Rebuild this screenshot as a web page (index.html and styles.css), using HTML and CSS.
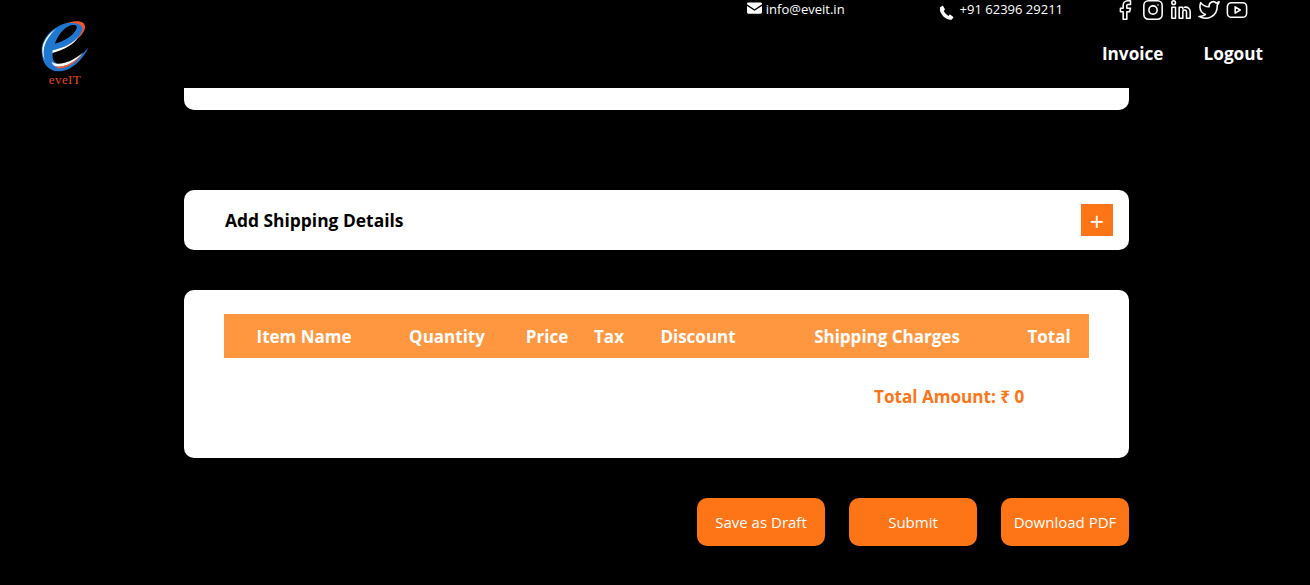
FILE: index.html
```html
<!DOCTYPE html>
<html lang="en">
  <head>
    <meta charset="UTF-8" />
    <meta name="viewport" content="width=device-width, initial-scale=1.0" />
    <title>Invoice</title>
    <link rel="stylesheet" href="styles.css">
  </head>
  <body>
    <header class="header">
      <a class="logo" href="#">
        <svg class="logo-mark" viewBox="123 62 144 156" width="48" height="52">
          <path class="logo-blue" fill-rule="evenodd" d="M125 150C125 105 175 65 225 65 250 65 258 80 245 100 228 125 190 143 160 150 152 180 165 195 190 192 220 188 245 165 265 142 250 175 215 213 175 213 145 213 125 190 125 150ZM165 130C190 122 218 108 228 88 235 75 225 72 212 75 190 82 172 108 165 130Z"/>
          <path class="logo-red" d="M205 68C225 60 257 60 255 82 253 97 240 110 225 120 240 105 250 92 246 80 242 70 225 67 205 68Z"/>
          <path class="logo-white" d="M158 150C190 143 220 128 234 110 226 131 190 149 157 158Z"/>
          <path class="logo-white" d="M155 184C170 197 212 190 250 156 226 190 186 203 166 198 160 195 157 190 155 184Z"/>
          <path class="logo-red" d="M166 198C186 203 226 190 250 156 228 194 190 208 172 204Z"/>
          <path class="logo-white" d="M127 150C127 125 145 100 170 84 150 102 133 125 131 152 130 162 132 172 135 180 130 172 127 162 127 150Z"/>
        </svg>
        <span class="logo-text">eveIT</span>
      </a>
      <div class="header-right">
        <div class="contact-bar">
          <span class="contact contact-mail">
            <svg class="mail-icon" viewBox="0 0 16 12" width="15" height="12">
              <path d="M1.500 0h13A1.500 1.500 0 0 1 16 1.500v.6L8 7.200 0 2.100v-.6A1.500 1.500 0 0 1 1.500 0z"/>
              <path d="M0 3.800v6.700A1.500 1.500 0 0 0 1.500 12h13a1.500 1.500 0 0 0 1.500-1.500V3.800L8 8.900z"/>
            </svg>
            info@eveit.in
          </span>
          <span class="contact contact-phone">
            <svg class="phone-icon" viewBox="0 0 16 16" width="15" height="15">
              <path d="M3.200 1 1 2.600C.4 6 2 9.600 5 12.400c2.600 2.400 5.800 3.600 8.400 3.200l1.800-2c.3-.4.2-.9-.2-1.200l-2.800-2c-.4-.3-.8-.2-1.100.1l-1 1.100C8.500 11 5.600 8 5 6.400l1-1c.3-.3.4-.7.2-1.100L4.500 1.300C4.200.8 3.600.7 3.200 1z"/>
            </svg>
            +91 62396 29211
          </span>
          <div class="socials">
            <svg class="social" viewBox="0 0 24 24"><path d="M18 2h-3a5 5 0 0 0-5 5v3H7v4h3v8h4v-8h3l1-4h-4V7a1 1 0 0 1 1-1h3z"/></svg>
            <svg class="social" viewBox="0 0 24 24"><rect x="2" y="2" width="20" height="20" rx="5"/><circle cx="12" cy="12" r="4.500"/><path d="M17.500 6.500h.01"/></svg>
            <svg class="social" viewBox="0 0 24 24"><path d="M16 9a5 5 0 0 1 6 5v7h-4v-7a2 2 0 0 0-4 0v7h-4v-12h4v2"/><rect x="2" y="9" width="4" height="12"/><circle cx="4" cy="4" r="2"/></svg>
            <svg class="social" viewBox="0 0 24 24"><path d="M23 3a10.900 10.900 0 0 1-3 1.500 4.500 4.500 0 0 0-7.900 3v1A10.700 10.700 0 0 1 3 4s-4 9 5 13a11.600 11.600 0 0 1-7 2c9 5 20 0 20-11.500a4.500 4.500 0 0 0-.1-.8A7.700 7.700 0 0 0 23 3z"/></svg>
            <svg class="social" viewBox="0 0 24 24"><rect x="1.500" y="4" width="21" height="16" rx="4.500"/><path d="M10 8.500v7l5.500-3.500z"/></svg>
          </div>
        </div>
        <nav class="nav">
          <a href="#">Invoice</a>
          <a href="#">Logout</a>
        </nav>
      </div>
    </header>

    <main class="container">
      <div class="card card-top"></div>

      <div class="card card-shipping">
        <h3>Add Shipping Details</h3>
        <button class="add-btn">+</button>
      </div>

      <div class="card card-items">
        <table class="items">
          <thead>
            <tr>
              <th class="col-name">Item Name</th>
              <th class="col-qty">Quantity</th>
              <th class="col-price">Price</th>
              <th class="col-tax">Tax</th>
              <th class="col-discount">Discount</th>
              <th class="col-shipping">Shipping Charges</th>
              <th class="col-total">Total</th>
            </tr>
          </thead>
        </table>
        <p class="total-amount">Total Amount: ₹ 0</p>
      </div>

      <div class="actions">
        <button class="action-btn">Save as Draft</button>
        <button class="action-btn">Submit</button>
        <button class="action-btn">Download PDF</button>
      </div>
    </main>
  </body>
</html>
```

FILE: styles.css
```css
* {
  margin: 0;
  padding: 0;
  box-sizing: border-box;
}
body {
  background-color: #000;
  font-family: "Open Sans", "Noto Sans", sans-serif;
  color: #fff;
  height: 585px;
  overflow: hidden;
}
.header {
  height: 88px;
  display: flex;
  justify-content: space-between;
  padding: 0 47px 0 41px;
}
.logo {
  display: flex;
  flex-direction: column;
  align-items: center;
  width: 48px;
  padding-top: 21px;
  text-decoration: none;
}
.logo-mark {
  flex: none;
}
.logo-red {
  fill: #f0562a;
}
.logo-white {
  fill: #fff;
}
.logo-blue {
  fill: #1f77cf;
}
.logo-text {
  font-family: "Liberation Serif", serif;
  font-size: 13px;
  line-height: 14px;
  color: #e8471f;
  letter-spacing: 0.4px;
}
.header-right {
  display: flex;
  flex-direction: column;
  align-items: flex-end;
}
.contact-bar {
  display: flex;
  align-items: flex-start;
  height: 31px;
  padding-right: 15px;
}
.contact {
  display: flex;
  align-items: flex-start;
  font-size: 13px;
  line-height: 18px;
}
.contact-mail {
  margin-right: 94px;
}
.contact-phone {
  margin-right: 51px;
}
.mail-icon {
  fill: #fff;
  margin: 2px 4px 0 0;
}
.phone-icon {
  fill: #fff;
  margin: 5px 6px 0 0;
}
.socials {
  display: flex;
  gap: 6px;
  margin-top: -1px;
}
.social {
  width: 22px;
  height: 22px;
  fill: none;
  stroke: #fff;
  stroke-width: 1.700;
  stroke-linecap: round;
  stroke-linejoin: round;
}
.nav {
  display: flex;
  gap: 40px;
  margin-top: 12px;
}
.nav a {
  color: #fff;
  text-decoration: none;
  font-size: 17.200px;
  font-weight: 700;
  line-height: 22px;
}
.container {
  width: 945px;
  margin-left: 184px;
}
.card {
  background: #fff;
  border-radius: 10px;
  color: #000;
}
.card-top {
  height: 22px;
  border-radius: 0 0 10px 10px;
  margin-bottom: 80px;
}
.card-shipping {
  height: 60px;
  display: flex;
  align-items: center;
  justify-content: space-between;
  padding: 0 16px 0 41px;
  margin-bottom: 40px;
}
.card-shipping h3 {
  font-size: 17.400px;
  font-weight: 700;
}
.add-btn {
  width: 32px;
  height: 32px;
  border: 0;
  padding-top: 3px;
  background: #fd7517;
  color: #fff;
  font-family: inherit;
  font-size: 25px;
  line-height: 29px;
}
.card-items {
  height: 168px;
  padding: 24px 40px;
  margin-bottom: 40px;
}
.items {
  width: 865px;
  table-layout: fixed;
  border-collapse: collapse;
  background: #ff9640;
  color: #fff;
}
.items th {
  height: 44px;
  font-size: 17px;
  font-weight: 700;
  text-align: center;
}
.col-name {
  width: 160px;
}
.col-qty {
  width: 126px;
}
.col-price {
  width: 74px;
}
.col-tax {
  width: 50px;
}
.col-discount {
  width: 128px;
}
.col-shipping {
  width: 250px;
}
.items .col-total {
  width: 77px;
  padding-right: 3px;
}
.total-amount {
  margin-top: 27px;
  padding-left: 650px;
  font-size: 17.100px;
  font-weight: 700;
  line-height: 24px;
  color: #fd7517;
  white-space: nowrap;
}
.actions {
  display: flex;
  justify-content: flex-end;
  gap: 24px;
}
.action-btn {
  width: 128px;
  height: 48px;
  border: 0;
  border-radius: 10px;
  background: #fd7517;
  color: #fff;
  font-family: inherit;
  font-size: 15px;
  white-space: nowrap;
}
```
